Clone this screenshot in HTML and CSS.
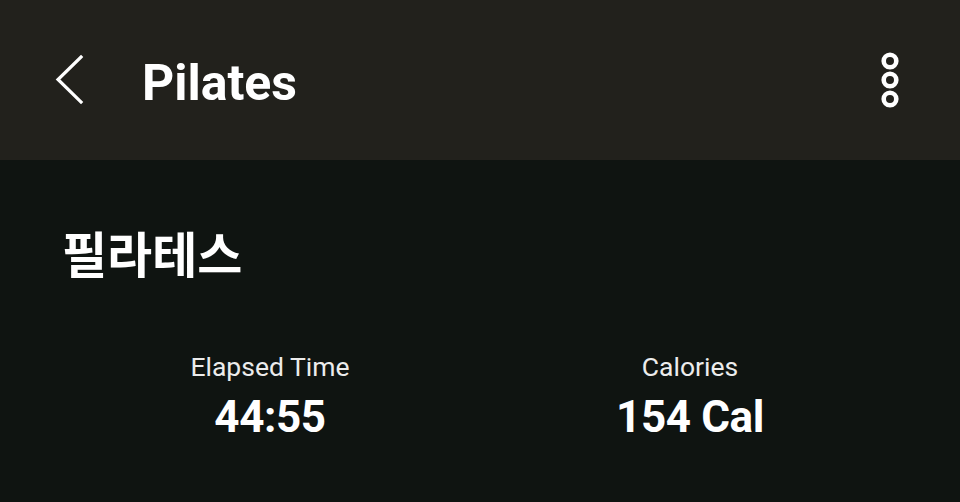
FILE: index.html
```html
<!DOCTYPE html>
<html lang="ko">
<head>
<meta charset="utf-8">
<link rel="stylesheet" href="styles.css">
</head>
<body>
<header class="appbar">
  <button class="icon-btn back" aria-label="Back">
    <svg width="40" height="60" viewBox="0 0 40 60"><path d="M26 7 L3 29.5 L26 52" fill="none" stroke="#fff" stroke-width="3.2" stroke-linecap="square"/></svg>
  </button>
  <h1 class="title">Pilates</h1>
  <button class="icon-btn more" aria-label="More">
    <svg width="24" height="60" viewBox="0 0 24 60"><g fill="none" stroke="#fff" stroke-width="4.6"><circle cx="12" cy="11" r="6.3"/><circle cx="12" cy="30" r="6.3"/><circle cx="12" cy="49" r="6.3"/></g></svg>
  </button>
</header>
<main class="content">
  <h2 class="exercise">필라테스</h2>
  <div class="stats">
    <div class="stat">
      <div class="label">Elapsed Time</div>
      <div class="value">44:55</div>
    </div>
    <div class="stat">
      <div class="label">Calories</div>
      <div class="value">154 Cal</div>
    </div>
  </div>
</main>
</body>
</html>
```
FILE: styles.css
```css
* { box-sizing: border-box; }
html, body { margin: 0; padding: 0; }
body {
  width: 960px;
  height: 502px;
  background: #0f1411;
  color: #fff;
  font-family: Roboto, "Noto Sans CJK KR", sans-serif;
  overflow: hidden;
}
.appbar {
  height: 160px;
  background: #22211c;
  display: flex;
  align-items: center;
  padding: 0 58px 0 55px;
}
.icon-btn {
  background: none;
  border: 0;
  padding: 0;
  display: flex;
  align-items: center;
}
.back { width: 40px; height: 60px; }
.title {
  margin: 6px 0 0 47px;
  font-size: 50px;
  font-weight: 700;
  letter-spacing: 0;
  flex: 1;
  line-height: 1;
}
.more { width: 24px; height: 60px; }
.content {
  padding: 57px 60px 0;
}
.exercise {
  margin: 0 0 0 2px;
  font-family: "Noto Sans CJK KR", sans-serif;
  font-size: 49px;
  font-weight: 700;
  line-height: 70px;
}
.stats {
  display: grid;
  grid-template-columns: 1fr 1fr;
  margin-top: 64px;
}
.stat {
  display: flex;
  flex-direction: column;
  align-items: center;
}
.label {
  font-size: 26.5px;
  color: #ececec;
  line-height: 32px;
}
.value {
  font-size: 44px;
  font-weight: 700;
  line-height: 52px;
  margin-top: 8px;
  letter-spacing: -0.4px;
}
```
